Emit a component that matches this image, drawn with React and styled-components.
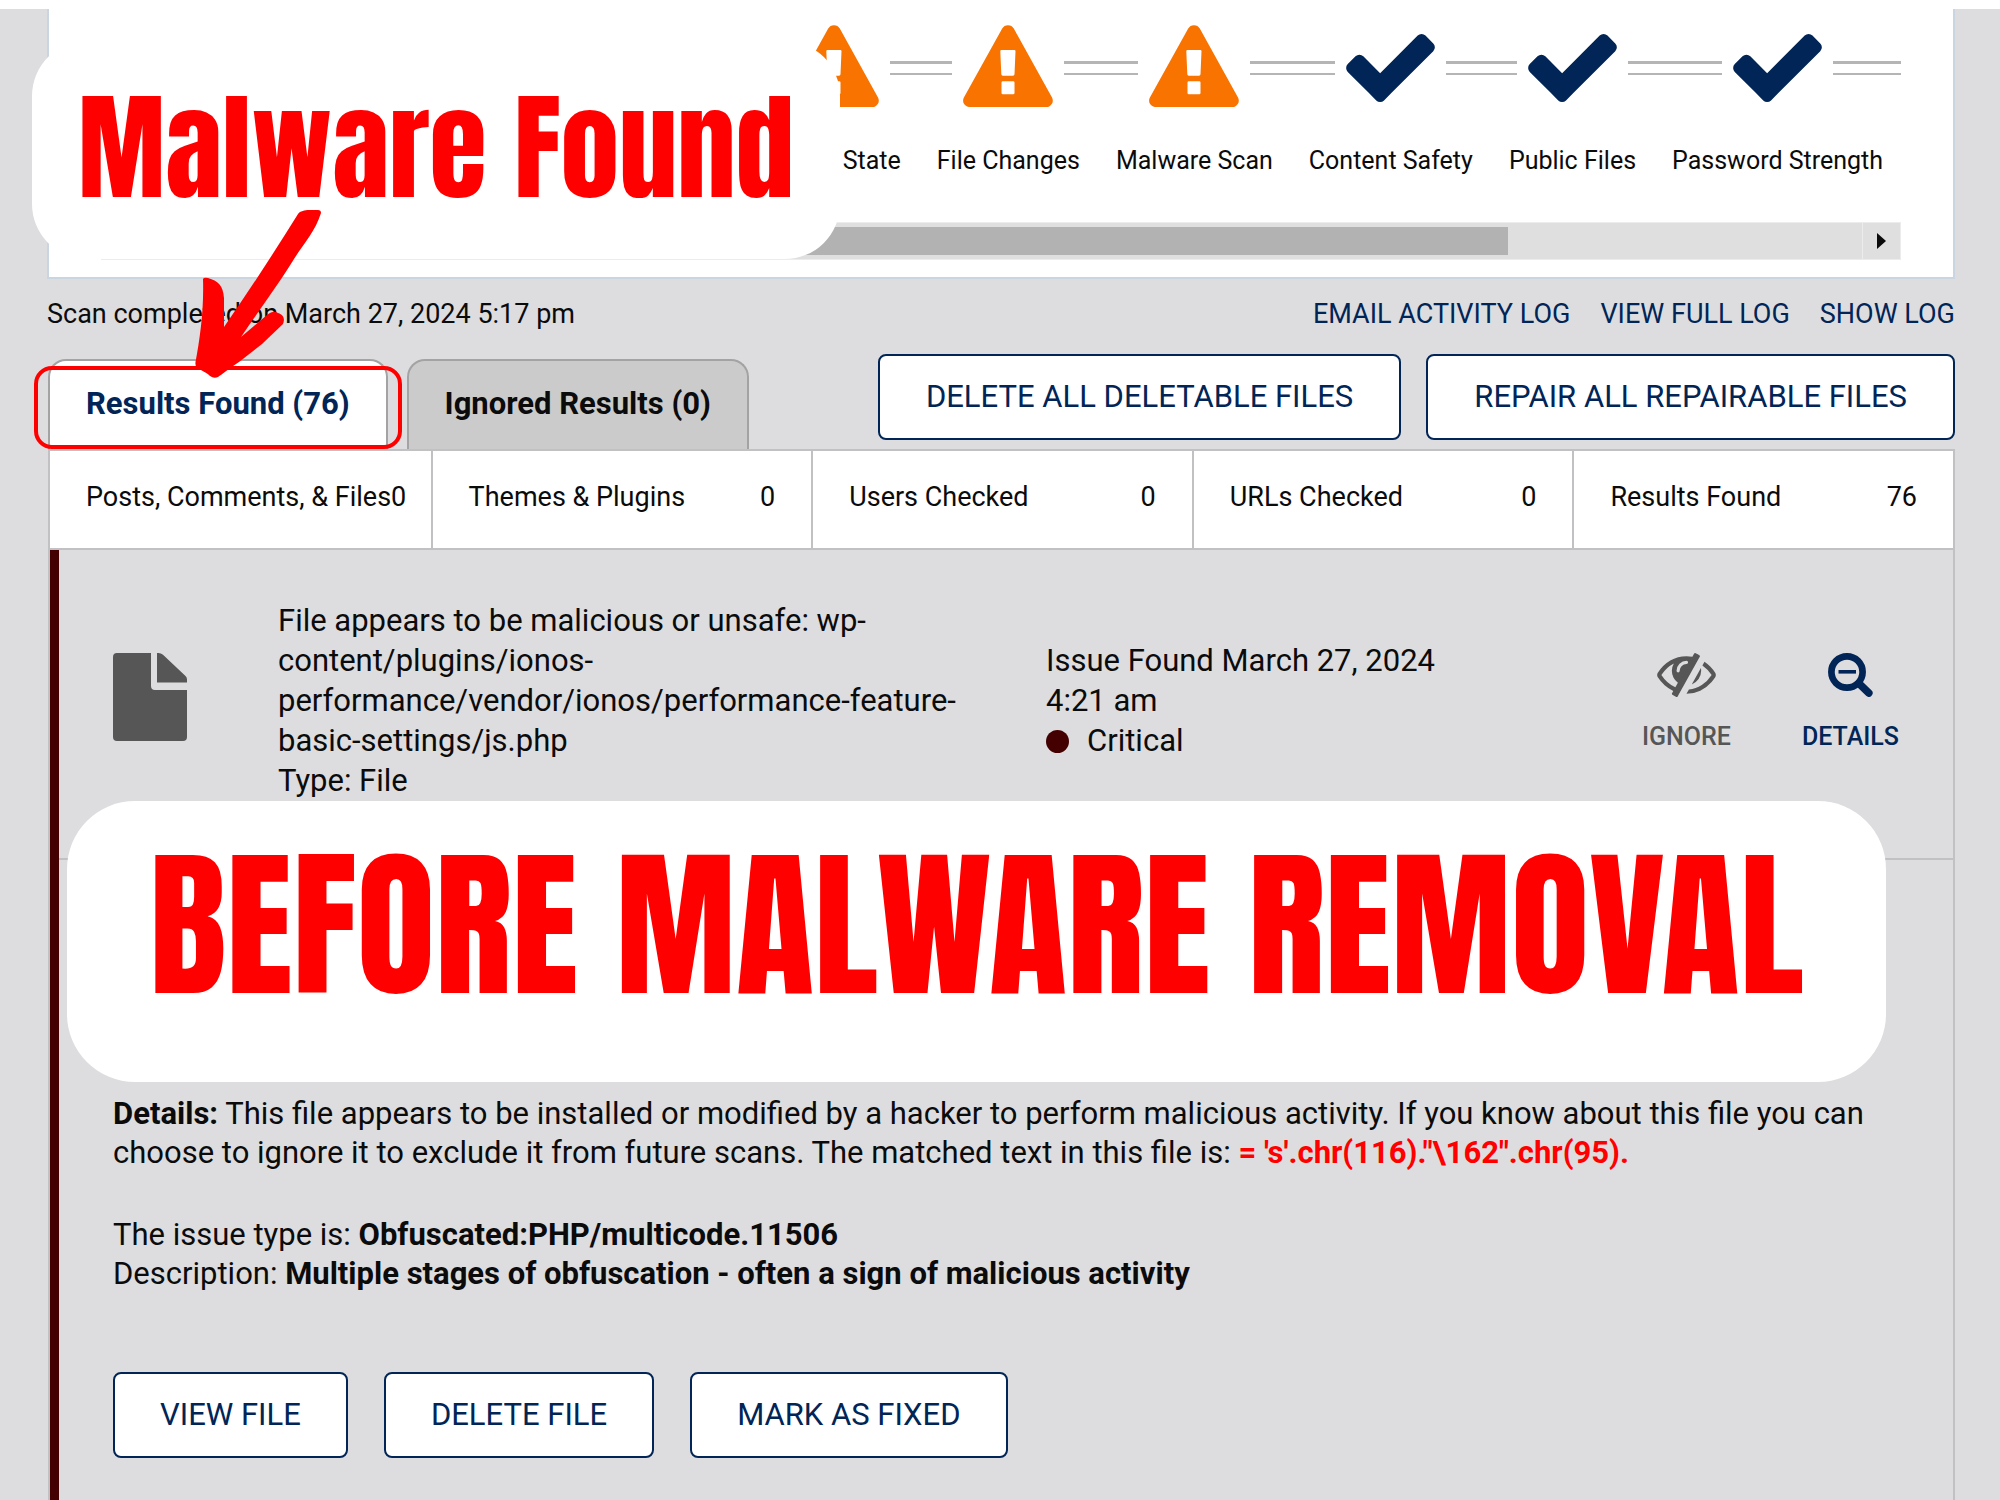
import React from "react";
import styled, { createGlobalStyle, css } from "styled-components";

const navy = "#002556";
const red = "#ff0000";
const line = "#c1c1c3";

const GlobalStyle = createGlobalStyle`
  *, *::before, *::after { box-sizing: border-box; }
  body {
    margin: 0;
    background: #dddddf;
    color: #0b0b0c;
    font-family: Roboto, "Liberation Sans", sans-serif;
    font-size: 27px;
    line-height: 32px;
    overflow-x: hidden;
  }
  p, h1, h2, ul, dl, dt, dd { margin: 0; padding: 0; }
`;

const Page = styled.main`
  position: relative;
  min-height: 100vh;
  overflow: hidden;
  border-top: 9px solid #fff;
  padding: 0 45px 0 47px;
  display: flex;
  flex-direction: column;
`;

const ScanPanel = styled.section`
  background: #fff;
  border: 2px solid #c9d5e1;
  border-top: 0;
  padding: 16px 52px 17px;
`;

const Steps = styled.ol`
  list-style: none;
  margin: 0;
  padding: 0;
  display: flex;
  justify-content: flex-end;
  overflow: hidden;
`;

const Step = styled.li`
  flex: none;
  min-width: 170px;
  display: flex;
  flex-direction: column;
  gap: 39px;
  ${(p) => p.$compact && css`min-width: 0;`}
`;

const StepTrack = styled.div`
  height: 82px;
  display: flex;
  align-items: center;
  gap: 11px;
`;

const Rail = styled.span`
  flex: 1;
  height: 14px;
  margin-top: 4px;
  border-top: 3px solid #b5b5b5;
  border-bottom: 2px solid #b5b5b5;
`;

const CheckMark = styled.svg`
  margin-top: 4px;
`;

const StepLabel = styled.span`
  padding: 0 18px;
  font-size: 25px;
  line-height: 30px;
  white-space: nowrap;
  text-align: ${(p) => p.$align || "center"};
`;

const ScrollBar = styled.div`
  margin-top: 46px;
  height: 38px;
  display: flex;
  background: #dfdfdf;
  border: 1px solid #ececec;
`;

const ScrollTrack = styled.div`
  flex: 1;
  padding: 4px 0;
  border-right: 1px solid #ececec;
`;

const ScrollThumb = styled.div`
  width: 79%;
  height: 28px;
  margin-left: 16px;
  background: #b2b2b2;
`;

const ScrollButton = styled.button`
  width: 37px;
  padding: 0;
  border: 0;
  background: transparent;
  display: flex;
  align-items: center;
  justify-content: center;
`;

const MetaRow = styled.div`
  margin-top: 19px;
  display: flex;
  justify-content: space-between;
`;

const LogLinks = styled.nav`
  display: flex;
  gap: 30px;
`;

const LogLink = styled.a`
  color: ${navy};
  text-decoration: none;
`;

const Toolbar = styled.div`
  margin-top: 24px;
  display: flex;
  justify-content: space-between;
  align-items: flex-end;
`;

const Tabs = styled.div`
  display: flex;
  gap: 19px;
  padding-left: 1px;
`;

const Tab = styled.button`
  height: 90px;
  padding: 0 36px 2px;
  border: 2px solid #a3a3a3;
  border-bottom: 0;
  border-radius: 18px 18px 0 0;
  background: ${(p) => (p.$active ? "#fff" : "#cbcbcb")};
  color: ${(p) => (p.$active ? navy : "#0b0b0c")};
  font: 700 31px/36px Roboto, sans-serif;
  white-space: nowrap;
`;

const ButtonRow = styled.div`
  display: flex;
  gap: ${(p) => p.$gap}px;
  padding-bottom: ${(p) => p.$below || 0}px;
`;

const OutlineButton = styled.button`
  height: 86px;
  padding: 0 ${(p) => (p.$wide ? 46 : 45)}px;
  border: 2px solid ${navy};
  border-radius: 8px;
  background: #fff;
  color: ${navy};
  font: 400 31px/36px Roboto, sans-serif;
  white-space: nowrap;
`;

const Stats = styled.dl`
  margin-left: 1px;
  display: grid;
  grid-template-columns: repeat(5, minmax(0, 1fr));
  border: 2px solid ${line};
  background: #fff;
`;

const Stat = styled.div`
  height: 97px;
  padding: 30px 36px;
  display: flex;
  justify-content: space-between;
  white-space: nowrap;
  & + & { border-left: 2px solid ${line}; }
`;

const Result = styled.article`
  flex: 1;
  margin-left: 1px;
  border-left: 2px solid ${line};
  border-right: 2px solid ${line};
`;

const Severity = styled.div`
  height: 100%;
  border-left: 9px solid #440000;
`;

const Summary = styled.div`
  height: 310px;
  padding: 0 54px 6px;
  border-bottom: 2px solid ${line};
  display: grid;
  grid-template-columns: 74px 731px 412px 1fr;
  column-gap: 64px;
  align-items: center;
  font-size: 31px;
  line-height: 40px;
`;

const FileBadge = styled.div`
  display: flex;
  padding-bottom: 8px;
`;

const Message = styled.div`
  padding-left: 27px;
`;

const Status = styled.div`
  display: flex;
  align-items: center;
  gap: 18px;
`;

const Dot = styled.span`
  width: 23px;
  height: 23px;
  border-radius: 50%;
  background: #440000;
`;

const Actions = styled.div`
  display: flex;
  justify-content: flex-end;
  gap: 71px;
  padding-top: 4px;
`;

const IconButton = styled.button`
  padding: 0;
  border: 0;
  background: transparent;
  color: ${(p) => (p.$strong ? navy : "#565656")};
  display: flex;
  flex-direction: column;
  align-items: center;
  gap: 24px;
  font: 500 25px/32px Roboto, sans-serif;
`;

const Details = styled.div`
  padding: 234px 54px 42px;
  font-size: 31px;
  line-height: 39px;
`;

const Paragraph = styled.p`
  margin-bottom: ${(p) => p.$below}px;
`;

const Match = styled.strong`
  color: ${red};
`;

const Callout = styled.div`
  position: absolute;
  background: #fff;
  color: ${red};
  font-family: Anton, "Liberation Sans Narrow", "Roboto Condensed", Roboto, sans-serif;
  font-weight: 400;
  white-space: nowrap;
  display: flex;
  justify-content: center;
`;

const FoundCallout = styled(Callout)`
  left: 32px;
  top: 32px;
  width: 808px;
  height: 218px;
  border-radius: 55px;
  font-size: 117px;
  line-height: 213px;
`;

const BeforeCallout = styled(Callout)`
  left: 67px;
  right: 114px;
  top: 792px;
  height: 281px;
  border-radius: 68px;
  font-size: 161px;
  line-height: 248px;
`;

const Highlight = styled.div`
  position: absolute;
  left: 34px;
  top: 357px;
  width: 368px;
  height: 83px;
  border: 4px solid ${red};
  border-radius: 18px;
`;

const Arrow = styled.svg`
  position: absolute;
  left: 190px;
  top: 200px;
`;

function WarningIcon() {
  return (
    <svg width="90" height="82" viewBox="0 0 90 82" aria-hidden="true">
      <path fill="#f97300" d="M50.8 3.6 89 72.5a6.4 6.4 0 0 1-5.6 9.5H6.4A6.4 6.4 0 0 1 .9 72.500L39.200 3.600a6.600 6.600 0 0 1 11.600 0z" />
      <path fill="#fff" d="M38.500 25h12.800a1.200 1.200 0 0 1 1.200 1.300l-1 23a1.500 1.500 0 0 1-1.500 1.400H39.800a1.500 1.500 0 0 1-1.500-1.400l-1-23A1.200 1.200 0 0 1 38.500 25zM39.800 56.300h10.400a1.300 1.300 0 0 1 1.300 1.300v10.400a1.300 1.300 0 0 1-1.300 1.300H39.800a1.300 1.300 0 0 1-1.300-1.300V57.600a1.300 1.300 0 0 1 1.300-1.300z" />
    </svg>
  );
}

function CheckIcon() {
  return (
    <CheckMark width="89" height="68" viewBox="121 334 1550 1188" aria-hidden="true">
      <path fill={navy} d="M1671 566q0 40-28 68l-724 724-136 136q-28 28-68 28t-68-28l-136-136-362-362q-28-28-28-68t28-68l136-136q28-28 68-28t68 28l294 295 656-657q28-28 68-28t68 28l136 136q28 28 28 68z" />
    </CheckMark>
  );
}

function FileIcon() {
  return (
    <svg width="74" height="88" viewBox="0 0 74 88" aria-hidden="true">
      <path fill="#565656" d="M38 0H4a4 4 0 0 0-4 4v80a4 4 0 0 0 4 4h66a4 4 0 0 0 4-4V37H42a4 4 0 0 1-4-4zM44 0v29.500h30v-3a5 5 0 0 0-1.500-3.500L50 1.800A8 8 0 0 0 44.500 0z" />
    </svg>
  );
}

function EyeSlashIcon() {
  return (
    <svg width="59" height="44" viewBox="0 288 1792 1344" aria-hidden="true">
      <path fill="currentColor" d="M555 1335l78-141q-87-63-136-159t-49-203q0-121 61-225-229 117-381 353 167 258 427 375zm389-759q0-20-14-34t-34-14q-125 0-214.500 89.500t-89.500 214.500q0 20 14 34t34 14 34-14 14-34q0-86 61-147t147-61q20 0 34-14t14-34zm363-191q0 7-1 9-106 189-316 567t-315 566l-49 89q-10 16-28 16-12 0-134-70-16-10-16-28 0-12 44-87-143-65-263.500-173t-208.500-245q-20-31-20-69t20-69q153-235 380-371t496-136q89 0 180 17l54-97q10-16 28-16 5 0 18 6t31 15.500 33 18.500 31.500 18.500 19.500 11.500q16 10 16 27zm37 447q0 139-79 253.500t-209 164.500l280-502q8 45 8 84zm448 128q0 35-20 69-39 64-109 145-150 172-347.500 267t-419.500 95l74-132q212-18 392.500-137t301.500-307q-115-179-282-294l63-112q95 64 182.500 153t144.500 184q20 34 20 69z" />
    </svg>
  );
}

function ZoomOutIcon() {
  return (
    <svg width="45" height="44" viewBox="0 0 45 44" fill="none" stroke="currentColor" aria-hidden="true">
      <circle cx="19" cy="19" r="15.600" strokeWidth="6.700" />
      <path d="M31 30.500 40.800 40" strokeWidth="7.600" strokeLinecap="round" />
      <path d="M10.500 18.800H28" strokeWidth="3.600" />
    </svg>
  );
}

const steps = [
  { label: "State", Icon: WarningIcon, align: "right" },
  { label: "File Changes", Icon: WarningIcon },
  { label: "Malware Scan", Icon: WarningIcon },
  { label: "Content Safety", Icon: CheckIcon },
  { label: "Public Files", Icon: CheckIcon },
  { label: "Password Strength", Icon: CheckIcon },
];

const stats = [
  ["Posts, Comments, & Files", "0"],
  ["Themes & Plugins", "0"],
  ["Users Checked", "0"],
  ["URLs Checked", "0"],
  ["Results Found", "76"],
];

export default function App() {
  return (
    <>
      <GlobalStyle />
      <Page>
        <ScanPanel>
          <Steps>
            {steps.map(({ label, Icon, align }) => (
              <Step key={label} $compact={!align}>
                <StepTrack>
                  <Rail />
                  <Icon />
                  <Rail />
                </StepTrack>
                <StepLabel $align={align}>{label}</StepLabel>
              </Step>
            ))}
          </Steps>
          <ScrollBar>
            <ScrollTrack>
              <ScrollThumb />
            </ScrollTrack>
            <ScrollButton aria-label="Scroll right">
              <svg width="9" height="16" viewBox="0 0 9 16" aria-hidden="true">
                <path d="M0 0 9 8 0 16z" fill="#0b0b0c" />
              </svg>
            </ScrollButton>
          </ScrollBar>
        </ScanPanel>

        <MetaRow>
          <p>Scan completed on March 27, 2024 5:17 pm</p>
          <LogLinks>
            <LogLink href="#email">EMAIL ACTIVITY LOG</LogLink>
            <LogLink href="#full">VIEW FULL LOG</LogLink>
            <LogLink href="#show">SHOW LOG</LogLink>
          </LogLinks>
        </MetaRow>

        <Toolbar>
          <Tabs role="tablist">
            <Tab role="tab" aria-selected="true" $active>Results Found (76)</Tab>
            <Tab role="tab" aria-selected="false">Ignored Results (0)</Tab>
          </Tabs>
          <ButtonRow $gap={25} $below={9}>
            <OutlineButton $wide>DELETE ALL DELETABLE FILES</OutlineButton>
            <OutlineButton $wide>REPAIR ALL REPAIRABLE FILES</OutlineButton>
          </ButtonRow>
        </Toolbar>

        <Stats>
          {stats.map(([name, value]) => (
            <Stat key={name}>
              <dt>{name}</dt>
              <dd>{value}</dd>
            </Stat>
          ))}
        </Stats>

        <Result>
          <Severity>
            <Summary>
              <FileBadge>
                <FileIcon />
              </FileBadge>
              <Message>
                <p>
                  File appears to be malicious or unsafe: wp-content/plugins/ionos-performance/vendor/ionos/performance-feature-basic-settings/js.php
                </p>
                <p>Type: File</p>
              </Message>
              <div>
                <p>Issue Found March 27, 2024 4:21 am</p>
                <Status>
                  <Dot />
                  Critical
                </Status>
              </div>
              <Actions>
                <IconButton>
                  <EyeSlashIcon />
                  IGNORE
                </IconButton>
                <IconButton $strong>
                  <ZoomOutIcon />
                  DETAILS
                </IconButton>
              </Actions>
            </Summary>
            <Details>
              <Paragraph $below={43}>
                <strong>Details:</strong> This file appears to be installed or modified by a hacker to perform
                malicious activity. If you know about this file you can choose to ignore it to exclude it from future
                scans. The matched text in this file is: <Match>{"= 's'.chr(116).\"\\162\".chr(95)."}</Match>
              </Paragraph>
              <Paragraph $below={79}>
                The issue type is: <strong>Obfuscated:PHP/multicode.11506</strong>
                <br />
                Description: <strong>Multiple stages of obfuscation - often a sign of malicious activity</strong>
              </Paragraph>
              <ButtonRow $gap={36}>
                <OutlineButton>VIEW FILE</OutlineButton>
                <OutlineButton>DELETE FILE</OutlineButton>
                <OutlineButton>MARK AS FIXED</OutlineButton>
              </ButtonRow>
            </Details>
          </Severity>
        </Result>

        <FoundCallout>Malware Found</FoundCallout>
        <BeforeCallout>BEFORE MALWARE REMOVAL</BeforeCallout>
        <Highlight />
        <Arrow width="140" height="180" viewBox="190 209 140 180" aria-hidden="true">
          <path
            fill={red}
            d="M298 214C300 211 305 210 309 210H318Q321 210 321 213C315 232 304 243 294 259C280 282 260 309 241 337L267 315C272 311 275 311 278 313C284 315 285 319 283 324L262 344L239 362C230 368 221 375 218 377Q214 379 210 376C206 372 200 370 197 368Q195 366 195.500 362C200 338 204 310 203 279Q204 277 208 278C218 281 223 285 224 298V327Q260 275 298 214Z"
          />
        </Arrow>
      </Page>
    </>
  );
}
